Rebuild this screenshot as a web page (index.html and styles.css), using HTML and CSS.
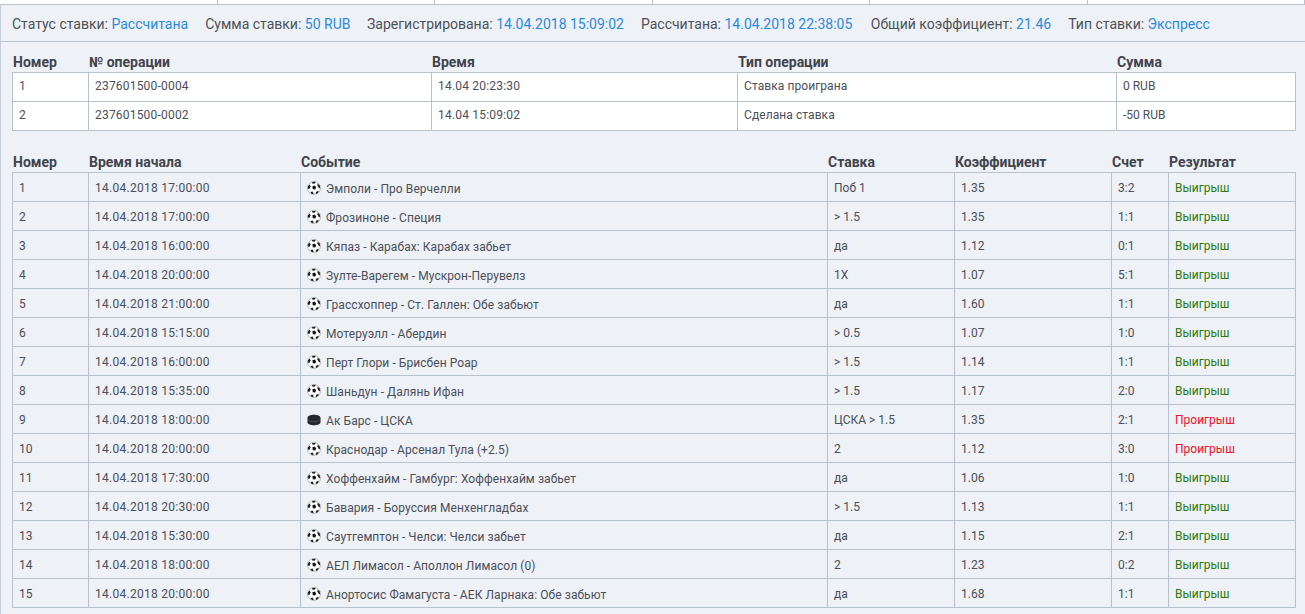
FILE: index.html
```html
<!DOCTYPE html>
<html lang="ru">
<head>
<meta charset="utf-8">
<title>Ставка</title>
<link rel="stylesheet" href="styles.css">
</head>
<body>
<svg class="defs" width="0" height="0" aria-hidden="true">
  <symbol id="ball" viewBox="0 0 14 14">
    <circle cx="7" cy="7" r="6.4" fill="#fff" stroke="#8a8f94" stroke-width=".6"/>
    <path d="M5.4 5.2 7.6 4.4 9.2 6.2 8.2 8.4 5.8 8.2Z" fill="#111"/>
    <path d="M5 .9 8.6.8 8 2.6 5.6 2.7Z" fill="#222"/>
    <path d="M.8 5.2 2.8 3.6 3.6 5.6 2.4 8 .8 7.6Z" fill="#222"/>
    <path d="M10.6 2.4 12.8 4.6 13.2 7.4 11.4 6.4 10.4 4.2Z" fill="#222"/>
    <path d="M3.6 11 5.6 10.6 6.6 12.2 6.2 13.3 4 12.6Z" fill="#222"/>
    <path d="M9.6 10.4 11.8 9.8 11 12 9 13 8.6 11.8Z" fill="#222"/>
  </symbol>
  <symbol id="puck" viewBox="0 0 14 14">
    <path d="M.5 4.8C.5 3 3.4 1.8 7 1.8s6.500 1.200 6.500 3v4.400c0 1.800-2.900 3-6.500 3s-6.500-1.200-6.500-3Z" fill="#26282b"/>
    <path d="M.8 6.400C2 8 4.400 8.700 7 8.700s5-.7 6.200-2.300" fill="none" stroke="#55585c" stroke-width=".7"/>
  </symbol>
</svg>

<div class="top-strip">
  <div class="strip-cell"></div>
  <div class="strip-cell"></div>
  <div class="strip-cell"></div>
  <div class="strip-cell"></div>
  <div class="strip-cell"></div>
  <div class="strip-cell"></div>
</div>

<main class="panel">
  <div class="status">
    <span>Статус ставки: <b class="val">Рассчитана</b></span>
    <span>Сумма ставки: <b class="val">50 RUB</b></span>
    <span>Зарегистрирована: <b class="val">14.04.2018 15:09:02</b></span>
    <span>Рассчитана: <b class="val">14.04.2018 22:38:05</b></span>
    <span>Общий коэффициент: <b class="val">21.46</b></span>
    <span>Тип ставки: <b class="val">Экспресс</b></span>
  </div>

  <div class="content">
    <table class="grid ops">
      <colgroup>
        <col class="o1"><col class="o2"><col class="o3"><col class="o4"><col class="o5">
      </colgroup>
      <thead>
        <tr><th>Номер</th><th>№ операции</th><th>Время</th><th>Тип операции</th><th>Сумма</th></tr>
      </thead>
      <tbody>
        <tr><td>1</td><td>237601500-0004</td><td>14.04 20:23:30</td><td>Ставка проиграна</td><td>0 RUB</td></tr>
        <tr><td>2</td><td>237601500-0002</td><td>14.04 15:09:02</td><td>Сделана ставка</td><td>-50 RUB</td></tr>
      </tbody>
    </table>

    <table class="grid events">
      <colgroup>
        <col class="e1"><col class="e2"><col class="e3"><col class="e4"><col class="e5"><col class="e6"><col class="e7">
      </colgroup>
      <thead>
        <tr><th>Номер</th><th>Время начала</th><th>Событие</th><th>Ставка</th><th>Коэффициент</th><th>Счет</th><th>Результат</th></tr>
      </thead>
      <tbody>
        <tr><td>1</td><td>14.04.2018 17:00:00</td><td><div class="ev"><svg class="ico"><use href="#ball"/></svg>Эмполи - Про Верчелли</div></td><td>Поб 1</td><td>1.35</td><td>3:2</td><td class="win">Выигрыш</td></tr>
        <tr><td>2</td><td>14.04.2018 17:00:00</td><td><div class="ev"><svg class="ico"><use href="#ball"/></svg>Фрозиноне - Специя</div></td><td>&gt; 1.5</td><td>1.35</td><td>1:1</td><td class="win">Выигрыш</td></tr>
        <tr><td>3</td><td>14.04.2018 16:00:00</td><td><div class="ev"><svg class="ico"><use href="#ball"/></svg>Кяпаз - Карабах: Карабах забьет</div></td><td>да</td><td>1.12</td><td>0:1</td><td class="win">Выигрыш</td></tr>
        <tr><td>4</td><td>14.04.2018 20:00:00</td><td><div class="ev"><svg class="ico"><use href="#ball"/></svg>Зулте-Варегем - Мускрон-Перувелз</div></td><td>1X</td><td>1.07</td><td>5:1</td><td class="win">Выигрыш</td></tr>
        <tr><td>5</td><td>14.04.2018 21:00:00</td><td><div class="ev"><svg class="ico"><use href="#ball"/></svg>Грассхоппер - Ст. Галлен: Обе забьют</div></td><td>да</td><td>1.60</td><td>1:1</td><td class="win">Выигрыш</td></tr>
        <tr><td>6</td><td>14.04.2018 15:15:00</td><td><div class="ev"><svg class="ico"><use href="#ball"/></svg>Мотеруэлл - Абердин</div></td><td>&gt; 0.5</td><td>1.07</td><td>1:0</td><td class="win">Выигрыш</td></tr>
        <tr><td>7</td><td>14.04.2018 16:00:00</td><td><div class="ev"><svg class="ico"><use href="#ball"/></svg>Перт Глори - Брисбен Роар</div></td><td>&gt; 1.5</td><td>1.14</td><td>1:1</td><td class="win">Выигрыш</td></tr>
        <tr><td>8</td><td>14.04.2018 15:35:00</td><td><div class="ev"><svg class="ico"><use href="#ball"/></svg>Шаньдун - Далянь Ифан</div></td><td>&gt; 1.5</td><td>1.17</td><td>2:0</td><td class="win">Выигрыш</td></tr>
        <tr><td>9</td><td>14.04.2018 18:00:00</td><td><div class="ev"><svg class="ico"><use href="#puck"/></svg>Ак Барс - ЦСКА</div></td><td>ЦСКА &gt; 1.5</td><td>1.35</td><td>2:1</td><td class="lose">Проигрыш</td></tr>
        <tr><td>10</td><td>14.04.2018 20:00:00</td><td><div class="ev"><svg class="ico"><use href="#ball"/></svg>Краснодар - Арсенал Тула (+2.5)</div></td><td>2</td><td>1.12</td><td>3:0</td><td class="lose">Проигрыш</td></tr>
        <tr><td>11</td><td>14.04.2018 17:30:00</td><td><div class="ev"><svg class="ico"><use href="#ball"/></svg>Хоффенхайм - Гамбург: Хоффенхайм забьет</div></td><td>да</td><td>1.06</td><td>1:0</td><td class="win">Выигрыш</td></tr>
        <tr><td>12</td><td>14.04.2018 20:30:00</td><td><div class="ev"><svg class="ico"><use href="#ball"/></svg>Бавария - Боруссия Менхенгладбах</div></td><td>&gt; 1.5</td><td>1.13</td><td>1:1</td><td class="win">Выигрыш</td></tr>
        <tr><td>13</td><td>14.04.2018 15:30:00</td><td><div class="ev"><svg class="ico"><use href="#ball"/></svg>Саутгемптон - Челси: Челси забьет</div></td><td>да</td><td>1.15</td><td>2:1</td><td class="win">Выигрыш</td></tr>
        <tr><td>14</td><td>14.04.2018 18:00:00</td><td><div class="ev"><svg class="ico"><use href="#ball"/></svg>АЕЛ Лимасол - Аполлон Лимасол (0)</div></td><td>2</td><td>1.23</td><td>0:2</td><td class="win">Выигрыш</td></tr>
        <tr><td>15</td><td>14.04.2018 20:00:00</td><td><div class="ev"><svg class="ico"><use href="#ball"/></svg>Анортосис Фамагуста - АЕК Ларнака: Обе забьют</div></td><td>да</td><td>1.68</td><td>1:1</td><td class="win">Выигрыш</td></tr>
      </tbody>
    </table>
  </div>
</main>
</body>
</html>
```
FILE: styles.css
```css
html, body {
  margin: 0;
  height: 100%;
  overflow: hidden;
}
body {
  background: #fff;
  font-family: Roboto, sans-serif;
  font-size: 12px;
  color: #4a4f5a;
}
.defs {
  position: absolute;
}
.top-strip {
  display: flex;
  height: 4px;
  margin-left: .5px;
  background: #fff;
}
.strip-cell {
  width: 217.5px;
  box-sizing: border-box;
  border-right: 1px solid #b8c2cc;
}
.panel {
  background: #eef1f5;
  border-top: 1px solid #b8c2cc;
  border-left: 1px solid #c4ccd5;
  height: 609px;
}
.status {
  display: flex;
  gap: 17px;
  align-items: center;
  box-sizing: border-box;
  height: 37px;
  padding: 2px 0 0 11px;
  border-bottom: 1px solid #b8c2cc;
  font-size: 14px;
  color: #4d5158;
}
.status span:nth-child(3) {
  margin-left: -.5px;
}
.status span:nth-child(5) {
  margin-left: 1.5px;
}
.val {
  font-weight: 400;
  color: #2a8bdc;
}
.content {
  padding: 9px 9px 0 11px;
}
.grid {
  border-collapse: collapse;
  table-layout: fixed;
  width: 1284px;
}
.grid th {
  height: 21px;
  padding: 0 0 0 .5px;
  text-align: left;
  font-size: 14px;
  font-weight: 700;
  color: #3f444d;
  white-space: nowrap;
}
.grid td {
  box-sizing: border-box;
  height: 29px;
  padding: 0 6px;
  border: 1px solid #b8c2cc;
  white-space: nowrap;
}
.ops {
  margin-bottom: 20px;
}
.ops td {
  background: #fff;
  padding-bottom: 2px;
}
.ops td:nth-child(2),
.ops td:nth-child(3) {
  letter-spacing: .2px;
}
.ops td:nth-child(4) {
  letter-spacing: .08px;
}
.events td {
  padding-top: 2px;
}
.events td:nth-child(2) {
  letter-spacing: .27px;
}
.o1 { width: 76px; }
.o2 { width: 343px; }
.o3 { width: 306px; }
.o4 { width: 379px; }
.o5 { width: 179px; }
.e1 { width: 76px; }
.e2 { width: 212px; }
.e3 { width: 527px; }
.e4 { width: 127px; }
.e5 { width: 157px; }
.e6 { width: 57px; }
.e7 { width: 127px; }
.ev {
  display: flex;
  align-items: center;
  gap: 5px;
  padding-top: 2px;
  letter-spacing: .07px;
}
.ico {
  width: 14px;
  height: 14px;
  margin-top: -3px;
  flex: none;
}
.win {
  color: #2c7a0e;
}
.lose {
  color: #f0122d;
}
```
